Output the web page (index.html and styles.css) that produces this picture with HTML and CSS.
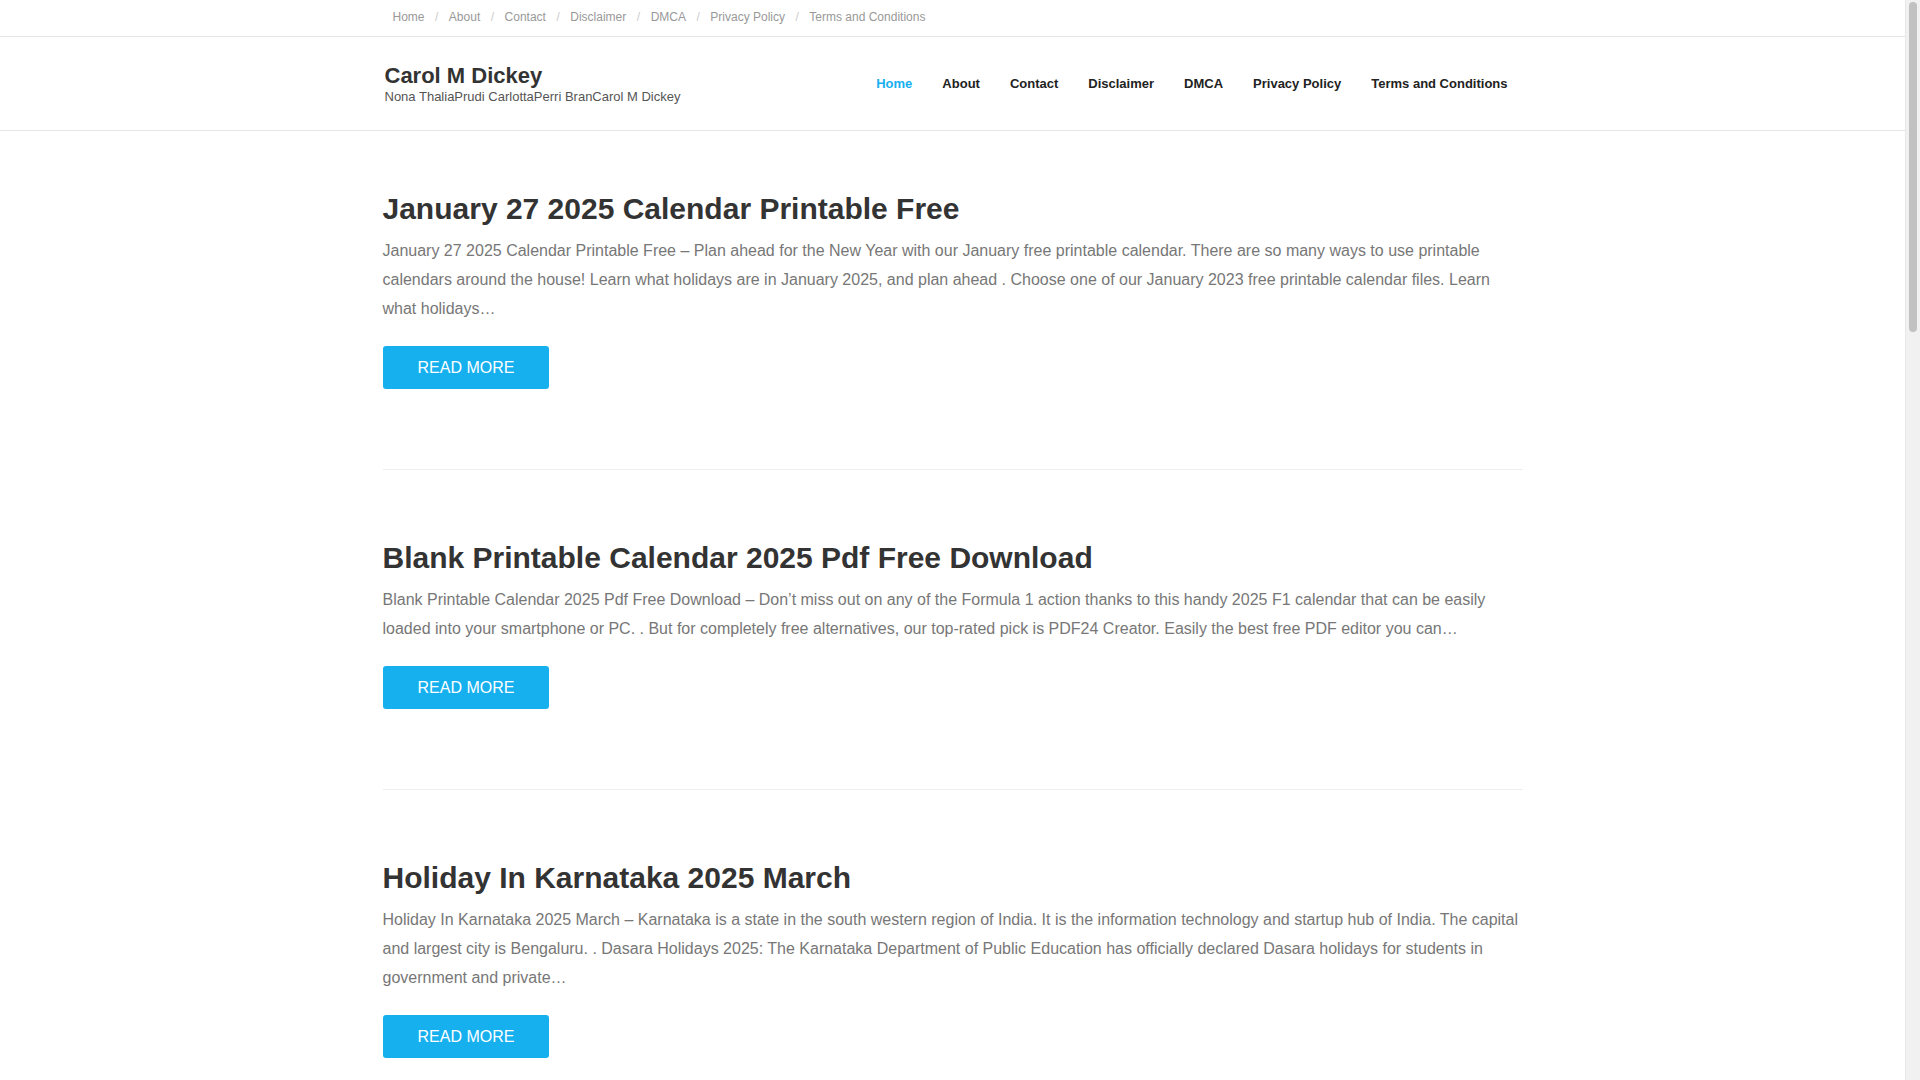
FILE: index.html
```html
<!DOCTYPE html>
<html lang="en">
<head>
<meta charset="utf-8">
<title>Carol M Dickey</title>
<link rel="stylesheet" href="styles.css">
</head>
<body>
<div class="scrollbar"><div class="thumb"></div></div>
<div class="topbar">
  <div class="container">
    <ul class="toplinks">
      <li><a href="#">Home</a></li>
      <li class="sep">/</li>
      <li><a href="#">About</a></li>
      <li class="sep">/</li>
      <li><a href="#">Contact</a></li>
      <li class="sep">/</li>
      <li><a href="#">Disclaimer</a></li>
      <li class="sep">/</li>
      <li><a href="#">DMCA</a></li>
      <li class="sep">/</li>
      <li><a href="#">Privacy Policy</a></li>
      <li class="sep">/</li>
      <li><a href="#">Terms and Conditions</a></li>
    </ul>
  </div>
</div>
<header class="header">
  <div class="container header-inner">
    <div class="brand">
      <div class="site-title">Carol M Dickey</div>
      <div class="tagline">Nona ThaliaPrudi CarlottaPerri BranCarol M Dickey</div>
    </div>
    <nav class="mainnav">
      <a href="#" class="active">Home</a>
      <a href="#">About</a>
      <a href="#">Contact</a>
      <a href="#">Disclaimer</a>
      <a href="#">DMCA</a>
      <a href="#">Privacy Policy</a>
      <a href="#">Terms and Conditions</a>
    </nav>
  </div>
</header>
<main class="container content">
  <article class="post first">
    <h2 class="post-title">January 27 2025 Calendar Printable Free</h2>
    <p class="excerpt">January 27 2025 Calendar Printable Free – Plan ahead for the New Year with our January free printable calendar. There are so many ways to use printable calendars around the house! Learn what holidays are in January 2025, and plan ahead . Choose one of our January 2023 free printable calendar files. Learn what holidays…</p>
    <a href="#" class="btn">READ MORE</a>
  </article>
  <article class="post">
    <h2 class="post-title">Blank Printable Calendar 2025 Pdf Free Download</h2>
    <p class="excerpt">Blank Printable Calendar 2025 Pdf Free Download – Don’t miss out on any of the Formula 1 action thanks to this handy 2025 F1 calendar that can be easily loaded into your smartphone or PC. . But for completely free alternatives, our top-rated pick is PDF24 Creator. Easily the best free PDF editor you can…</p>
    <a href="#" class="btn">READ MORE</a>
  </article>
  <article class="post">
    <h2 class="post-title">Holiday In Karnataka 2025 March</h2>
    <p class="excerpt">Holiday In Karnataka 2025 March – Karnataka is a state in the south western region of India. It is the information technology and startup hub of India. The capital and largest city is Bengaluru. . Dasara Holidays 2025: The Karnataka Department of Public Education has officially declared Dasara holidays for students in government and private…</p>
    <a href="#" class="btn">READ MORE</a>
  </article>
</main>
</body>
</html>
```

FILE: styles.css
```css
* { box-sizing: border-box; }
html, body { margin: 0; padding: 0; }
body {
  font-family: "Liberation Sans", Arial, sans-serif;
  color: #333;
  background: #fff;
  margin-right: 15px;
}
a { text-decoration: none; }

/* imitation of the browser scrollbar seen in the screenshot */
.scrollbar {
  position: fixed;
  top: 0;
  right: 0;
  width: 15px;
  height: 100vh;
  background: #f1f1f1;
  border-left: 1px solid #e8e8e8;
}
.scrollbar .thumb {
  position: absolute;
  top: 2px;
  left: 3px;
  width: 8px;
  height: 330px;
  border-radius: 4px;
  background: #c1c1c1;
}

.container {
  width: 1170px;
  margin: 0 auto;
  padding: 0 15px;
}

/* top bar */
.topbar {
  height: 37px;
  border-bottom: 1px solid #e6e6e6;
}
.toplinks {
  list-style: none;
  margin: 0;
  padding: 0 0 0 10px;
  display: flex;
  align-items: center;
  height: 34px;
  font-size: 12px;
}
.toplinks a { color: #999; }
.toplinks .sep {
  color: #ccc;
  padding: 0 10.5px;
}

/* header */
.header {
  height: 94px;
  border-bottom: 1px solid #e6e6e6;
}
.header-inner {
  display: flex;
  align-items: center;
  justify-content: space-between;
  height: 93px;
}
.brand { padding-left: 2px; padding-top: 1px; }
.site-title {
  font-size: 22px;
  line-height: 26px;
  font-weight: bold;
  color: #333;
}
.tagline {
  font-size: 13px;
  line-height: 16px;
  color: #555;
}
.mainnav {
  display: flex;
  align-items: center;
  padding-top: 1px;
}
.mainnav a {
  font-size: 13px;
  font-weight: bold;
  color: #222;
  padding: 0 15px;
  line-height: 20px;
}
.mainnav a.active { color: #16b0ef; }

/* posts */
.post {
  padding: 70px 0 80px;
  border-bottom: 1px solid #eee;
}
.post.first { padding-top: 60px; }
.post-title {
  margin: 0 0 9px;
  font-size: 30px;
  line-height: 36px;
  font-weight: bold;
  color: #333;
}
.excerpt {
  margin: 0 0 23px;
  font-size: 16px;
  line-height: 29px;
  color: #777;
}
.btn {
  display: inline-block;
  background: #16b0ef;
  color: #fff;
  font-size: 16px;
  line-height: 43px;
  height: 43px;
  padding: 0 35px;
  border-radius: 3px;
}
```
